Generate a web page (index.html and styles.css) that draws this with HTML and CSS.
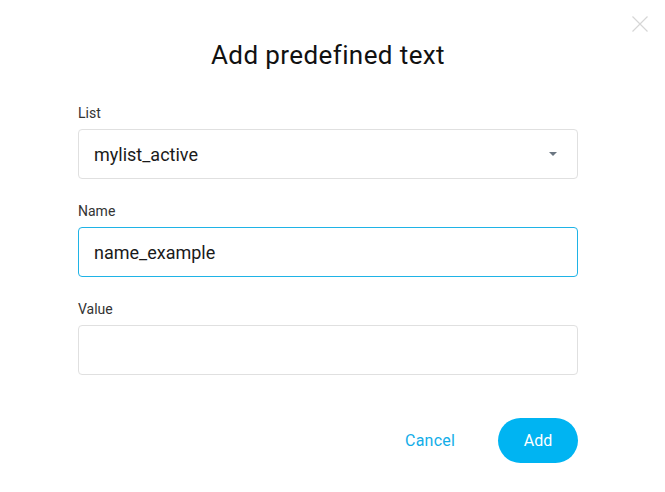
FILE: index.html
```html
<!DOCTYPE html>
<html>
<head>
<meta charset="utf-8">
<link rel="stylesheet" href="styles.css">
</head>
<body>
<div class="dialog">
  <button class="close" aria-label="Close">
    <svg width="16" height="16" viewBox="0 0 16 16"><path d="M0.5 0.5L15.5 15.5M15.5 0.5L0.5 15.5" stroke="#d6d6d6" stroke-width="1.2" fill="none"/></svg>
  </button>
  <h1 class="title">Add predefined text</h1>
  <div class="field">
    <div class="label">List</div>
    <div class="input select">
      <span class="value">mylist_active</span>
      <span class="caret"></span>
    </div>
  </div>
  <div class="field">
    <div class="label">Name</div>
    <div class="input focused"><span class="value">name_example</span></div>
  </div>
  <div class="field">
    <div class="label">Value</div>
    <div class="input"></div>
  </div>
  <div class="actions">
    <button class="btn-text">Cancel</button>
    <button class="btn-primary">Add</button>
  </div>
</div>
</body>
</html>
```
FILE: styles.css
```css
html, body {
  margin: 0;
  padding: 0;
  background: #ffffff;
}
body {
  font-family: Roboto, "Liberation Sans", sans-serif;
  color: #212121;
}
.dialog {
  position: relative;
  width: 665px;
  height: 492px;
  box-sizing: border-box;
  padding: 40px 87px 0 78px;
}
.close {
  position: absolute;
  top: 16px;
  right: 17px;
  width: 16px;
  height: 16px;
  padding: 0;
  border: 0;
  background: none;
  display: block;
}
.close svg { display: block; }
.title {
  margin: 0 0 33px 0;
  font-size: 26px;
  letter-spacing: 0.4px;
  font-weight: 400;
  line-height: 30px;
  text-align: center;
  color: #111;
}
.field {
  display: flex;
  flex-direction: column;
  margin-bottom: 22px;
}
.label {
  font-size: 14px;
  line-height: 20px;
  color: #333;
  margin-bottom: 6px;
}
.input {
  height: 50px;
  box-sizing: border-box;
  border: 1px solid #e0e0e0;
  border-radius: 4px;
  display: flex;
  align-items: center;
  padding: 0 15px;
}
.input.focused {
  border-color: #1fb3e6;
}
.value {
  font-size: 18px;
  color: #1a1a1a;
}
.select {
  justify-content: space-between;
  padding-right: 20px;
}
.caret {
  width: 0;
  height: 0;
  border-left: 4px solid transparent;
  border-right: 4px solid transparent;
  border-top: 4px solid #6b7682;
}
.actions {
  display: flex;
  justify-content: flex-end;
  align-items: center;
  margin-top: 43px;
}
.btn-text {
  border: 0;
  background: none;
  font-family: Roboto, "Liberation Sans", sans-serif;
  font-size: 16px;
  letter-spacing: 0.2px;
  color: #12ade8;
  padding: 0;
  margin-right: 43px;
}
.btn-primary {
  width: 80px;
  height: 45px;
  border: 0;
  border-radius: 23px;
  background: #00b4f2;
  color: #fff;
  font-family: Roboto, "Liberation Sans", sans-serif;
  font-size: 16px;
  padding: 0;
}
```
